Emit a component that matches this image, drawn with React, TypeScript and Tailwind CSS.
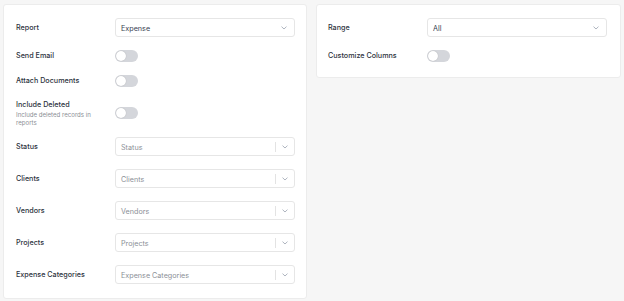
import React from 'react';

const font = { fontFamily: 'Inter, "Noto Sans", sans-serif' };

function Chevron() {
  return (
    <svg width="6" height="4" viewBox="0 0 6 4" fill="none" className="text-gray-400">
      <path d="M0.8 0.9L3 3L5.2 0.9" stroke="currentColor" strokeWidth="0.8" strokeLinecap="round" strokeLinejoin="round" />
    </svg>
  );
}

function SelectBox({ value, placeholder }: { value?: string; placeholder?: string }) {
  return (
    <div className="flex h-[19px] w-[180px] items-center rounded-[3px] border border-[#e6e6e6] bg-white pl-[5px]">
      <span className={`flex-1 pt-px text-[7.2px] leading-[9px] ${value ? 'text-[#374151]' : 'text-[#8b8f96]'}`}>
        {value ?? placeholder}
      </span>
      {placeholder && <span className="h-[10px] w-px bg-[#e3e3e3]" />}
      <span className={`flex items-center justify-center ${placeholder ? 'w-[18px]' : 'w-[20px]'}`}>
        <Chevron />
      </span>
    </div>
  );
}

function Toggle() {
  return (
    <div className="flex h-[12px] w-[23px] items-center rounded-full bg-[#d4d6db] px-[1px]">
      <span className="h-[10px] w-[10px] rounded-full bg-white shadow-[0_0_1px_rgba(0,0,0,0.25)]" />
    </div>
  );
}

function Row({ label, sub, children }: { label: string; sub?: string; children: React.ReactNode }) {
  return (
    <div className="flex items-center">
      <div className="w-[99px] pr-[6px]">
        <div className="text-[7.2px] font-medium leading-[10px] text-[#2d3340]">{label}</div>
        {sub && <div className="mt-[1px] max-w-[88px] text-[6.1px] leading-[7.5px] text-[#8b8f96]">{sub}</div>}
      </div>
      {children}
    </div>
  );
}

export default function App() {
  return (
    <div className="flex h-[301px] w-[624px] items-start gap-[9px] bg-[#f6f6f6] pl-[3px] pt-[4px]" style={font}>
      {/* Left card */}
      <div className="flex w-[304px] flex-col gap-[13px] rounded-[3px] border border-[#ececec] bg-white pb-[14px] pl-[12px] pt-[13px]">
        <Row label="Report">
          <SelectBox value="Expense" />
        </Row>
        <Row label="Send Email">
          <Toggle />
        </Row>
        <Row label="Attach Documents">
          <Toggle />
        </Row>
        <div className="h-[24px]">
          <Row label="Include Deleted" sub="Include deleted records in reports">
            <Toggle />
          </Row>
        </div>
        <Row label="Status">
          <SelectBox placeholder="Status" />
        </Row>
        <Row label="Clients">
          <SelectBox placeholder="Clients" />
        </Row>
        <Row label="Vendors">
          <SelectBox placeholder="Vendors" />
        </Row>
        <Row label="Projects">
          <SelectBox placeholder="Projects" />
        </Row>
        <Row label="Expense Categories">
          <SelectBox placeholder="Expense Categories" />
        </Row>
      </div>

      {/* Right card */}
      <div className="flex w-[305px] flex-col gap-[13px] rounded-[3px] border border-[#ececec] bg-white pb-[15px] pl-[11px] pt-[13px]">
        <Row label="Range">
          <SelectBox value="All" />
        </Row>
        <Row label="Customize Columns">
          <Toggle />
        </Row>
      </div>
    </div>
  );
}
